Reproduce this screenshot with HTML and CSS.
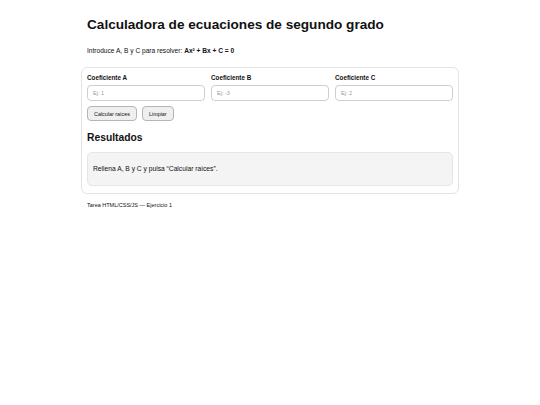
FILE: index.html
```html
<!DOCTYPE html>
<html lang="es">
<head>
<meta charset="utf-8">
<title>Calculadora</title>
<link rel="stylesheet" href="styles.css">
</head>
<body>
<main class="wrap">
  <header class="head">
    <h1 class="title">Calculadora de ecuaciones de segundo grado</h1>
    <p class="intro">Introduce A, B y C para resolver: <strong>Ax² + Bx + C = 0</strong></p>
  </header>
  <section class="card">
    <div class="fields">
      <label class="field"><span class="label">Coeficiente A</span><input class="input" placeholder="Ej: 1"></label>
      <label class="field"><span class="label">Coeficiente B</span><input class="input" placeholder="Ej: -3"></label>
      <label class="field"><span class="label">Coeficiente C</span><input class="input" placeholder="Ej: 2"></label>
    </div>
    <div class="actions">
      <button class="btn">Calcular raíces</button>
      <button class="btn">Limpiar</button>
    </div>
    <h2 class="subtitle">Resultados</h2>
    <div class="result">Rellena A, B y C y pulsa “Calcular raíces”.</div>
  </section>
  <footer class="foot">Tarea HTML/CSS/JS — Ejercicio 1</footer>
</main>
</body>
</html>
```
FILE: styles.css
```css
* { box-sizing: border-box; }
body {
  margin: 0;
  background: #fff;
  color: #111;
  font-family: "Liberation Sans", Arial, sans-serif;
}
.wrap {
  width: 378px;
  margin: 0 auto;
  padding-top: 15px;
}
.head { padding: 0 6px; }
.title {
  margin: 0;
  font-size: 13.6px;
  line-height: 20px;
  font-weight: bold;
}
.intro {
  margin: 12px 0 12px;
  font-size: 6.6px;
  line-height: 8px;
}
.card {
  border: 1px solid #e3e3e3;
  border-radius: 6px;
  padding: 6px 5px 7px;
}
.fields {
  display: grid;
  grid-template-columns: repeat(3, 1fr);
  gap: 6px;
}
.field { display: flex; flex-direction: column; gap: 3px; }
.label { font-size: 6.3px; font-weight: bold; line-height: 8px; }
.input {
  height: 16px;
  border: 1px solid #cfcfcf;
  border-radius: 4px;
  padding: 0 5px;
  font: 5.5px "Liberation Sans", Arial, sans-serif;
  color: #111;
  background: #fff;
}
.input::placeholder { color: #9a9a9a; }
.actions { display: flex; gap: 5px; margin-top: 5px; }
.btn {
  height: 15px;
  padding: 0 6px;
  border: 1px solid #b5b5b5;
  border-radius: 4px;
  background: #efefef;
  font: 5.4px "Liberation Sans", Arial, sans-serif;
  color: #111;
}
.subtitle {
  margin: 10px 0 8px;
  font-size: 10.3px;
  line-height: 13px;
  font-weight: bold;
}
.result {
  background: #f4f4f4;
  border: 1px solid #e6e6e6;
  border-radius: 5px;
  padding: 12px 5px;
  font-size: 6.7px;
  line-height: 8px;
}
.foot {
  padding: 8px 6px;
  font-size: 5.5px;
  line-height: 7px;
}
```
